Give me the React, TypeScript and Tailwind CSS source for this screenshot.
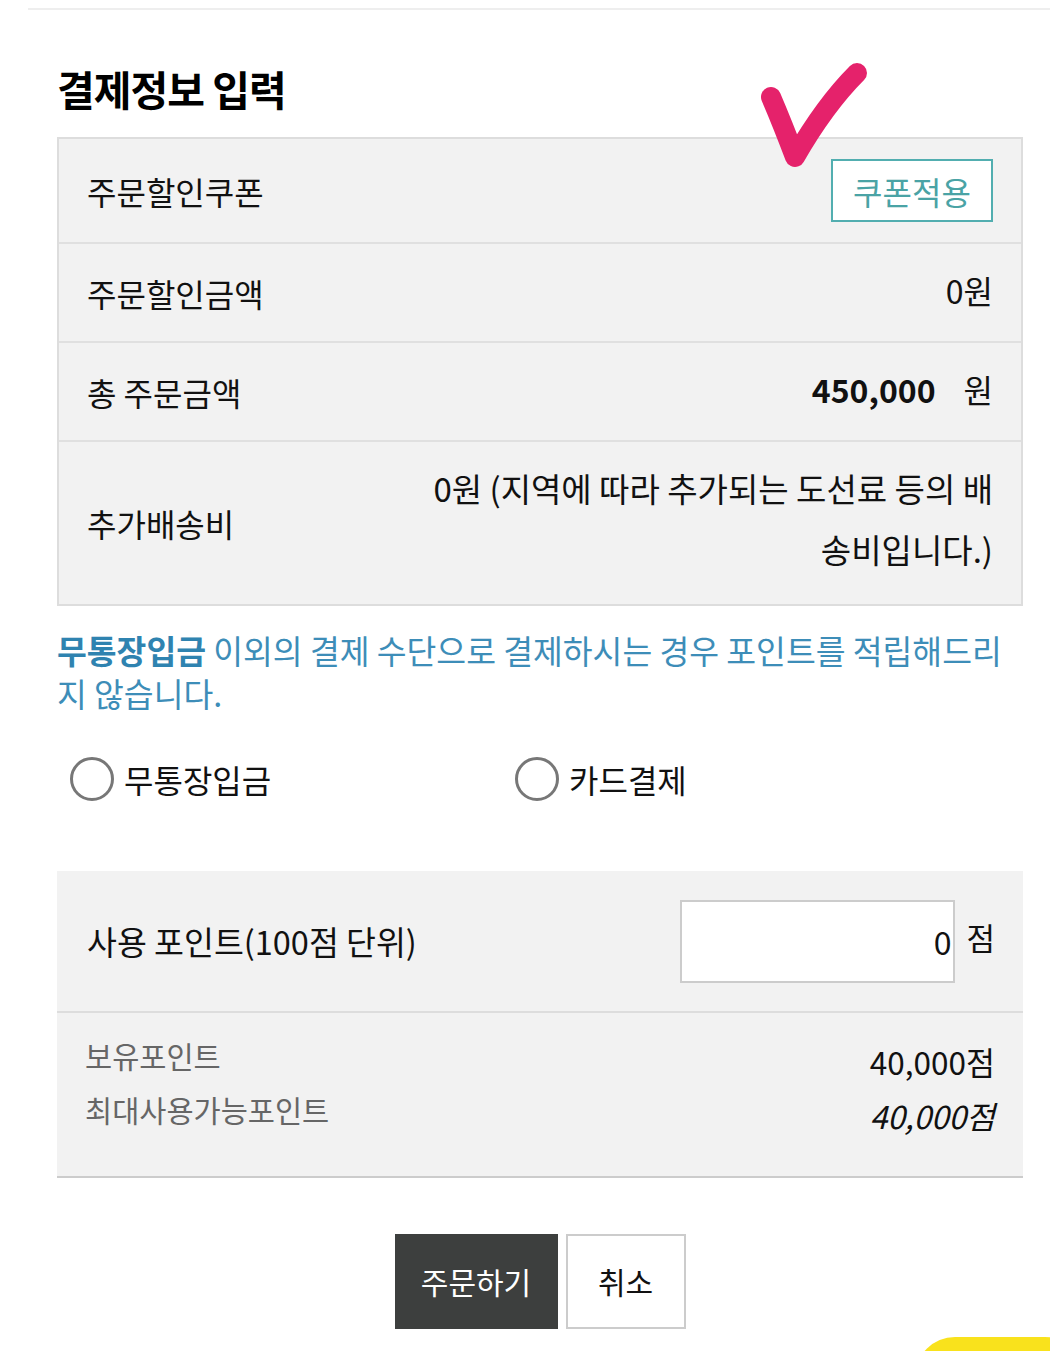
import React from 'react';

const font = { fontFamily: '"Noto Sans CJK KR", "Noto Sans", sans-serif' };

function Radio({ label }: { label: string }) {
  return (
    <label className="flex items-center gap-[10px] cursor-pointer">
      <span className="w-[44px] h-[44px] rounded-full border-[3px] border-[#777] bg-white" />
      <span className="text-[32px] leading-none text-[#111]">{label}</span>
    </label>
  );
}

export default function App() {
  return (
    <div className="relative w-[1050px] h-[1351px] overflow-hidden bg-white" style={font}>
      <div className="ml-[28px] mt-[8px] h-[2px] bg-[#eeeeee]" />

      <div className="pl-[57px] pr-[27px]">
        <h2 className="mt-[54px] text-[41px] leading-[48px] font-bold text-black tracking-[-1px]">결제정보 입력</h2>

        {/* order summary table */}
        <div className="relative mt-[25px] border-2 border-[#dddddd] bg-[#f2f2f2] text-[#111]">
          <div className="flex items-center justify-between h-[105px] px-[28px] border-b-2 border-[#e0e0e0]">
            <span className="text-[32px]">주문할인쿠폰</span>
            <button className="w-[162px] h-[63px] border-2 border-[#52aeb0] bg-white text-[32px] leading-none text-[#4aa3a5]">
              쿠폰적용
            </button>
          </div>
          <div className="flex items-center justify-between h-[99px] px-[28px] border-b-2 border-[#e0e0e0]">
            <span className="text-[32px]">주문할인금액</span>
            <span className="text-[32px] -mt-[6px]">0원</span>
          </div>
          <div className="flex items-center justify-between h-[99px] px-[28px] border-b-2 border-[#e0e0e0]">
            <span className="text-[32px]">총 주문금액</span>
            <span className="flex items-center gap-[28px] -mt-[6px]">
              <b className="text-[32px] font-bold">450,000</b>
              <span className="text-[32px]">원</span>
            </span>
          </div>
          <div className="flex items-center justify-between h-[162px] px-[28px]">
            <span className="text-[32px]">추가배송비</span>
            <span className="text-[33px] leading-[61px] text-right -mt-[8px]">
              0원 (지역에 따라 추가되는 도선료 등의 배<br />송비입니다.)
            </span>
          </div>
        </div>

        <p className="mt-[22px] text-[32.4px] leading-[43px] text-[#3d8db8]">
          <b className="font-bold text-[#2f83b0]">무통장입금</b>
          <span> 이외의 결제 수단으로 결제하시는 경우 포인트를 적립해드리지 않습니다.</span>
        </p>

        <div className="mt-[43px] grid grid-cols-[445px_1fr] pl-[13px]">
          <Radio label="무통장입금" />
          <Radio label="카드결제" />
        </div>

        {/* points */}
        <div className="mt-[70px] bg-[#f2f2f2] border-b-2 border-[#cccccc] text-[#111]">
          <div className="flex items-center justify-between h-[142px] pl-[30px] pr-[28px] border-b-2 border-[#dddddd]">
            <span className="text-[32.5px]">사용 포인트(100점 단위)</span>
            <div className="flex items-center gap-[11px]">
              <div className="w-[275px] h-[83px] border-2 border-[#cccccc] bg-white flex items-center justify-end pr-[2px] text-[32px]">
                0
              </div>
              <span className="text-[31px] -mt-[8px]">점</span>
            </div>
          </div>
          <div className="flex justify-between h-[163px] px-[28px] pt-[25px]">
            <div className="flex flex-col gap-[20px] text-[29.5px] leading-[34px] text-[#666666]">
              <span>보유포인트</span>
              <span>최대사용가능포인트</span>
            </div>
            <div className="flex flex-col gap-[20px] pt-[6px] text-[31.5px] leading-[34px] text-right">
              <span>40,000점</span>
              <span className="italic">40,000점</span>
            </div>
          </div>
        </div>

        <div className="mt-[56px] flex justify-center gap-[8px]">
          <button className="w-[163px] h-[95px] bg-[#3d3f3e] text-white text-[30px]">주문하기</button>
          <button className="w-[120px] h-[95px] border-2 border-[#cccccc] bg-white text-[#111] text-[30px]">취소</button>
        </div>
      </div>

      {/* hand-drawn check mark */}
      <svg className="absolute left-[745px] top-[55px]" width="130" height="120" viewBox="0 0 130 120">
        <path
          d="M26 42 Q38 70 50 102 Q80 50 112 18"
          fill="none"
          stroke="#e5226b"
          strokeWidth="20"
          strokeLinecap="round"
          strokeLinejoin="round"
        />
      </svg>

      {/* floating chat pill */}
      <div className="absolute left-[915px] top-[1337px] w-[170px] h-[80px] rounded-full bg-[#f9e21c]" />
    </div>
  );
}
